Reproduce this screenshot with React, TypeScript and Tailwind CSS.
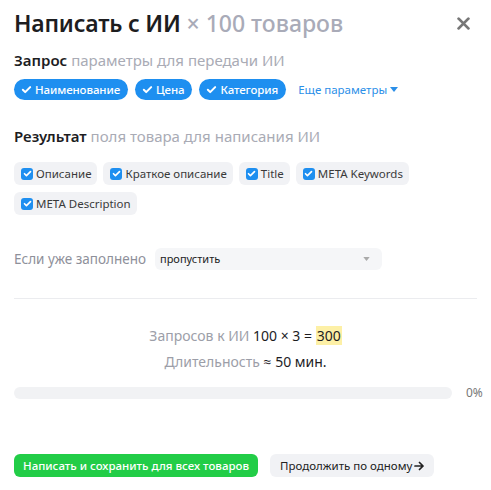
import React from 'react';

const Check = ({ className = '' }: { className?: string }) => (
  <svg className={className} viewBox="0 0 12 12" fill="none" stroke="currentColor" strokeWidth={2.2} strokeLinecap="round" strokeLinejoin="round">
    <path d="M2 6.3l2.6 2.6L10 3.4" />
  </svg>
);

const Pill = ({ label }: { label: string }) => (
  <span className="flex items-center gap-[3px] h-[21px] pl-[7px] pr-[8px] rounded-full bg-[#1e8ff0] text-white text-[11.5px] font-medium tracking-[-0.1px]">
    <Check className="w-[11px] h-[11px]" />
    {label}
  </span>
);

const Field = ({ label }: { label: string }) => (
  <span className="flex items-center gap-[3px] h-[23px] pl-[7px] pr-[6px] rounded-md bg-[#f1f2f5] text-[11.5px] text-[#3a3a3a]">
    <span className="w-[12px] h-[12px] rounded-[3px] bg-[#1e8ff0] flex items-center justify-center text-white">
      <Check className="w-[9px] h-[9px]" />
    </span>
    {label}
  </span>
);

export default function App() {
  return (
    <div className="w-[491px] h-[490px] bg-white px-[14px] pt-[8px] text-[#1d1d1f]" style={{ fontFamily: '"Noto Sans", "Open Sans", sans-serif' }}>
      <div className="flex items-center justify-between h-[30px]">
        <h1 className="text-[23px] font-semibold tracking-[-0.2px]">
          Написать с ИИ <span className="text-[#a9abb8] font-medium tracking-[0px]">× 100 товаров</span>
        </h1>
        <svg className="w-[13px] h-[13px] mr-[7px] text-[#777]" viewBox="0 0 12 12" stroke="currentColor" strokeWidth={2.6} strokeLinecap="round">
          <path d="M1.5 1.5l9 9M10.5 1.5l-9 9" />
        </svg>
      </div>

      <div className="mt-[11px] text-[15px] leading-[22px]">
        <span className="font-semibold">Запрос</span> <span className="text-[#a9abb5]">параметры для передачи ИИ</span>
      </div>
      <div className="flex items-center gap-[7px] mt-[8px]">
        <Pill label="Наименование" />
        <Pill label="Цена" />
        <Pill label="Категория" />
        <span className="ml-[5px] text-[11.5px] text-[#2b8fe8] flex items-center gap-[3px]">
          Еще параметры
          <svg className="w-[8px] h-[5px]" viewBox="0 0 8 5" fill="currentColor"><path d="M0 0h8L4 5z" /></svg>
        </span>
      </div>

      <div className="mt-[25px] text-[15px] leading-[22px]">
        <span className="font-semibold">Результат</span> <span className="text-[#a9abb5]">поля товара для написания ИИ</span>
      </div>
      <div className="flex flex-wrap gap-x-[6px] gap-y-[7px] mt-[15px] w-[420px]">
        <Field label="Описание" />
        <Field label="Краткое описание" />
        <Field label="Title" />
        <Field label="META Keywords" />
        <Field label="META Description" />
      </div>

      <div className="flex items-center mt-[33px]">
        <span className="text-[13.5px] text-[#8e909a] w-[141px]">Если уже заполнено</span>
        <div className="w-[227px] h-[22px] rounded-md bg-[#f5f6f8] flex items-center justify-between pl-[5px] pr-[12px] text-[11px] text-[#222]">
          пропустить
          <svg className="w-[7px] h-[4px] text-[#aaa]" viewBox="0 0 8 5" fill="currentColor"><path d="M0 0h8L4 5z" /></svg>
        </div>
      </div>

      <div className="h-px bg-[#ebecef] mt-[28px]" />

      <div className="mt-[26px] text-center text-[14px]">
        <span className="text-[#9c9ea8]">Запросов к ИИ</span> 100 × 3 = <span className="bg-[#fdf0a6] px-[1px]">300</span>
      </div>
      <div className="mt-[5px] text-center text-[14px]">
        <span className="text-[#9c9ea8]">Длительность</span> ≈ 50 мин.
      </div>

      <div className="flex items-center mt-[12px] -mr-[6px]">
        <div className="w-[438px] h-[12px] shrink-0 rounded-full bg-[#f1f2f4]" />
        <span className="ml-[14px] text-[12px] text-[#777] whitespace-nowrap">0%</span>
      </div>

      <div className="flex items-center gap-[12px] mt-[52px]">
        <button className="h-[23px] px-[9px] rounded-md bg-[#22cd47] text-white text-[11.5px] font-medium">Написать и сохранить для всех товаров</button>
        <button className="h-[23px] px-[10px] rounded-md bg-[#f1f2f5] text-[#222] text-[11.5px] flex items-center gap-[2px]">
          Продолжить по одному
          <svg className="w-[10px] h-[10px]" viewBox="0 0 10 10" fill="none" stroke="currentColor" strokeWidth={1.7} strokeLinecap="round" strokeLinejoin="round"><path d="M1 5h8M5.5 1.5L9 5 5.5 8.5" /></svg>
        </button>
      </div>
    </div>
  );
}
